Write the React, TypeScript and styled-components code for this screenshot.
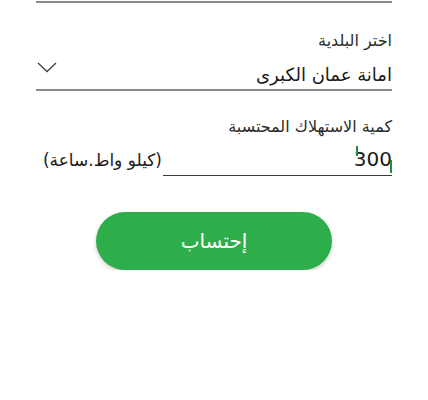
import styled, { createGlobalStyle } from "styled-components";

const GlobalStyle = createGlobalStyle`
    body {
        margin: 0;
        background: #ffffff;
        font-family: "DejaVu Sans", "Noto Sans", sans-serif;
    }
`

const Page = styled.main`
    direction: rtl;
    padding: 1px 36px 0 36px;
    display: flex;
    flex-direction: column;
`

const Rule = styled.div<{ $color?: string }>`
    height: 2px;
    background: ${p => p.$color ?? "#8a8a8a"};
`

const Field = styled.div`
    display: flex;
    flex-direction: column;
`

const Label = styled.label<{ $top: number }>`
    margin-top: ${p => p.$top}px;
    font-size: 16px;
    line-height: 20px;
    color: #2b2b2b;
`

const SelectRow = styled.div`
    display: flex;
    justify-content: space-between;
    align-items: flex-end;
    height: 38px;
    padding-bottom: 2px;
    box-sizing: border-box;
`

const Value = styled.span`
    font-size: 18px;
    line-height: 24px;
    color: #1a1a1a;
`

const Chevron = styled.svg`
    width: 20px;
    height: 11px;
    margin-bottom: 14px;
    margin-left: 1px;
`

const InputRow = styled.div`
    display: flex;
    align-items: flex-end;
    gap: 1px;
`

const InputBox = styled.div`
    position: relative;
    flex: 0 0 229px;
    height: 38px;
    box-sizing: content-box;
    border-bottom: 1px solid #3c3c3c;
    display: flex;
    align-items: flex-end;
    font-size: 20px;
    line-height: 22px;
    color: #1a1a1a;
`

const Digits = styled.span`
    padding-bottom: 5px;
`

const Handle = styled.span<{ $top: number; $right: number; $h: number }>`
    position: absolute;
    top: ${p => p.$top}px;
    right: ${p => p.$right}px;
    width: 2px;
    height: ${p => p.$h}px;
    background: #1e8c3a;
`

const Unit = styled.span`
    font-size: 17px;
    line-height: 22px;
    white-space: nowrap;
    color: #1a1a1a;
    padding-bottom: 5px;
`

const Button = styled.button`
    align-self: center;
    margin-top: 36px;
    width: 236px;
    height: 58px;
    border: none;
    border-radius: 29px;
    background: #2dae4b;
    color: #ffffff;
    font-family: inherit;
    font-size: 20px;
    box-shadow: 0 2px 4px rgba(0, 0, 0, 0.2);
`

export default function App() {
    return (
        <>
            <GlobalStyle/>
            <Page>
                <Rule/>
                <Field>
                    <Label $top={28}>اختر البلدية</Label>
                    <SelectRow>
                        <Value>امانة عمان الكبرى</Value>
                        <Chevron viewBox="0 0 20 11">
                            <path d="M1 1 L10 9.5 L19 1" fill="none" stroke="#444" strokeWidth="1.3"/>
                        </Chevron>
                    </SelectRow>
                    <Rule/>
                </Field>
                <Field>
                    <Label $top={26}>كمية الاستهلاك المحتسبة</Label>
                    <InputRow>
                        <InputBox>
                            <Digits>300</Digits>
                            <Handle $top={9} $right={34} $h={10}/>
                            <Handle $top={23} $right={0} $h={13}/>
                        </InputBox>
                        <Unit>(كيلو واط.ساعة)</Unit>
                    </InputRow>
                </Field>
                <Button>إحتساب</Button>
            </Page>
        </>
    );
}
